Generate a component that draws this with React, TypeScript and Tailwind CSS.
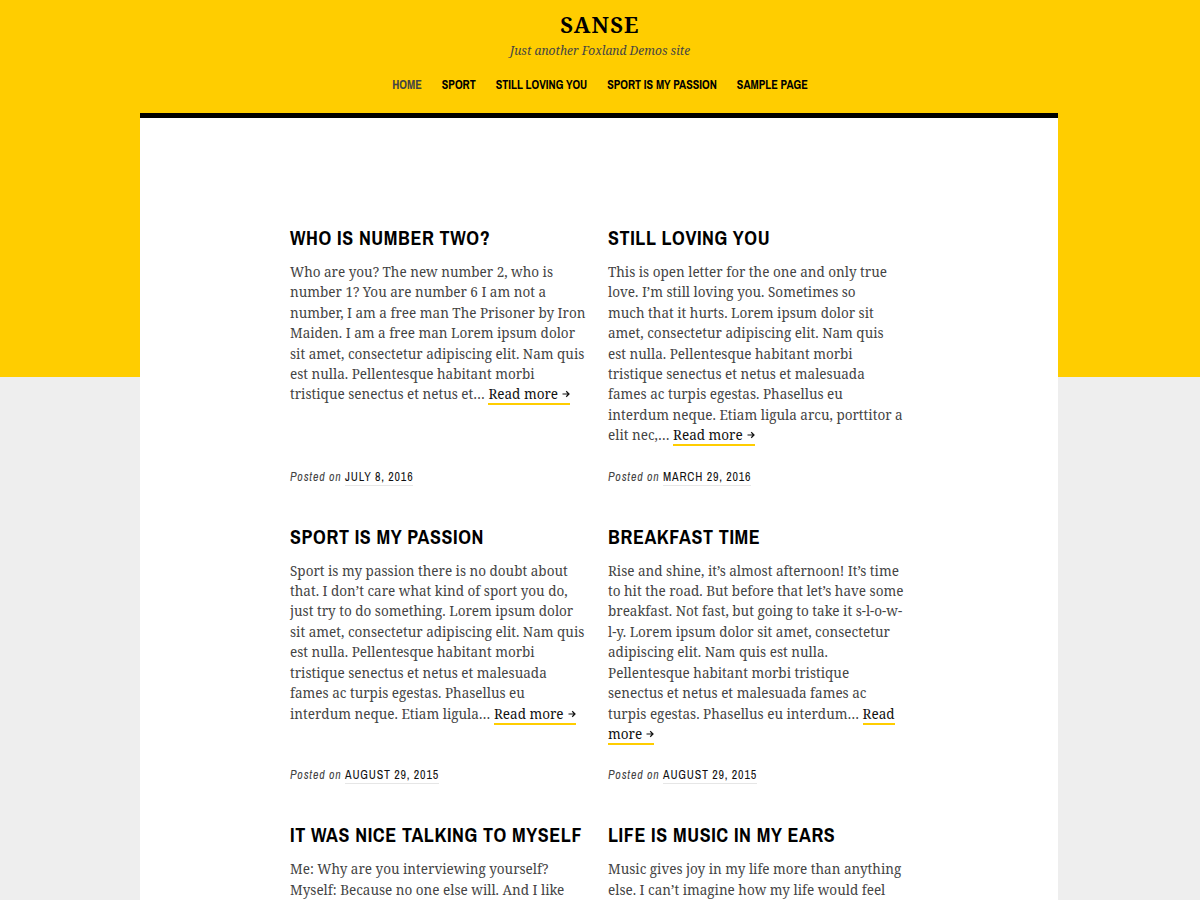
import React from 'react';

interface Post {
  title: string;
  excerpt: string;
  more?: string;
  date: string;
}

// line breaks follow the original theme's wrapping
const posts: Post[] = [
  {
    title: 'Who is number two?',
    excerpt:
      'Who are you? The new number 2, who is\nnumber 1? You are number 6 I am not a\nnumber, I am a free man The Prisoner by Iron\nMaiden. I am a free man Lorem ipsum dolor\nsit amet, consectetur adipiscing elit. Nam quis\nest nulla. Pellentesque habitant morbi\ntristique senectus et netus et…',
    date: 'July 8, 2016',
  },
  {
    title: 'Still loving you',
    excerpt:
      'This is open letter for the one and only true\nlove. I’m still loving you. Sometimes so\nmuch that it hurts. Lorem ipsum dolor sit\namet, consectetur adipiscing elit. Nam quis\nest nulla. Pellentesque habitant morbi\ntristique senectus et netus et malesuada\nfames ac turpis egestas. Phasellus eu\ninterdum neque. Etiam ligula arcu, porttitor a\nelit nec,…',
    date: 'March 29, 2016',
  },
  {
    title: 'Sport is my passion',
    excerpt:
      'Sport is my passion there is no doubt about\nthat. I don’t care what kind of sport you do,\njust try to do something. Lorem ipsum dolor\nsit amet, consectetur adipiscing elit. Nam quis\nest nulla. Pellentesque habitant morbi\ntristique senectus et netus et malesuada\nfames ac turpis egestas. Phasellus eu\ninterdum neque. Etiam ligula…',
    date: 'August 29, 2015',
  },
  {
    title: 'Breakfast time',
    excerpt:
      'Rise and shine, it’s almost afternoon! It’s time\nto hit the road. But before that let’s have some\nbreakfast. Not fast, but going to take it s-l-o-w-\nl-y. Lorem ipsum dolor sit amet, consectetur\nadipiscing elit. Nam quis est nulla.\nPellentesque habitant morbi tristique\nsenectus et netus et malesuada fames ac\nturpis egestas. Phasellus eu interdum…',
    more: 'Read\nmore',
    date: 'August 29, 2015',
  },
  {
    title: 'It was nice talking to myself',
    excerpt:
      'Me: Why are you interviewing yourself?\nMyself: Because no one else will. And I like\ntalking to myself. Lorem ipsum dolor sit amet,\nconsectetur adipiscing elit.',
    date: 'August 29, 2015',
  },
  {
    title: 'Life is music in my ears',
    excerpt:
      'Music gives joy in my life more than anything\nelse. I can’t imagine how my life would feel\nwithout it. Lorem ipsum dolor sit amet,\nconsectetur adipiscing elit.',
    date: 'August 29, 2015',
  },
];

const navItems = ['Home', 'Sport', 'Still loving you', 'Sport is my passion', 'Sample page'];

const narrow = "font-['Archivo_Narrow','Liberation_Sans_Narrow','DejaVu_Sans_Condensed',sans-serif]";
const serif = "font-['Noto_Serif','DejaVu_Serif',serif]";

function Arrow() {
  return (
    <svg width="8" height="8" viewBox="0 0 8 8" className="ml-[4px] inline-block align-[1px]" fill="none">
      <path d="M0.5 4H7M4.2 1.3L7 4L4.2 6.7" stroke="#111" strokeWidth="1.2" />
    </svg>
  );
}

export default function App() {
  return (
    <div className="min-h-screen bg-[#eeeeee] bg-[linear-gradient(#ffcd00_377px,#eeeeee_377px)]">
      <header className="pt-[11px] text-center">
        <h1 className={`${serif} text-[22px] font-bold tracking-[1.2px] text-black leading-[26px]`}>SANSE</h1>
        <p className={`${serif} mt-[5px] text-[12px] italic text-[#444] leading-[18px]`}>
          Just another Foxland Demos site
        </p>
        <nav className="mt-[17px] flex justify-center gap-[20px]">
          {navItems.map((item, i) => (
            <a
              key={item}
              href="#"
              className={`${narrow} text-[12px] font-bold uppercase leading-[16px] ${i === 0 ? 'text-[#444]' : 'text-black'}`}
            >
              {item}
            </a>
          ))}
        </nav>
      </header>

      <main className="ml-[140px] mt-[20px] w-[918px] border-t-[5px] border-black bg-white px-[150px] pt-[108px]">
        <div className="grid grid-cols-2 gap-x-[18px] gap-y-[39px]">
          {posts.map((post) => (
            <article key={post.title} className="flex flex-col">
              <h2
                className={`${narrow} text-[20px] font-bold uppercase tracking-[0.6px] text-black leading-[24px]`}
              >
                {post.title}
              </h2>
              <p className={`${serif} mt-[12px] whitespace-pre-line text-[13.5px] leading-[20.4px] text-[#444]`}>
                {post.excerpt}{' '}
                <a href="#" className="border-b-2 border-[#ffcd00] text-[#111]">
                  {post.more ?? 'Read more'}
                  <Arrow />
                </a>
              </p>
              <footer className={`${narrow} mt-auto pt-[22px] text-[12px] tracking-[0.8px] text-[#444]`}>
                <span className="italic">Posted on </span>
                <span className="border-b border-[#e6e6e6] uppercase text-[#111]">{post.date}</span>
              </footer>
            </article>
          ))}
        </div>
      </main>
    </div>
  );
}
